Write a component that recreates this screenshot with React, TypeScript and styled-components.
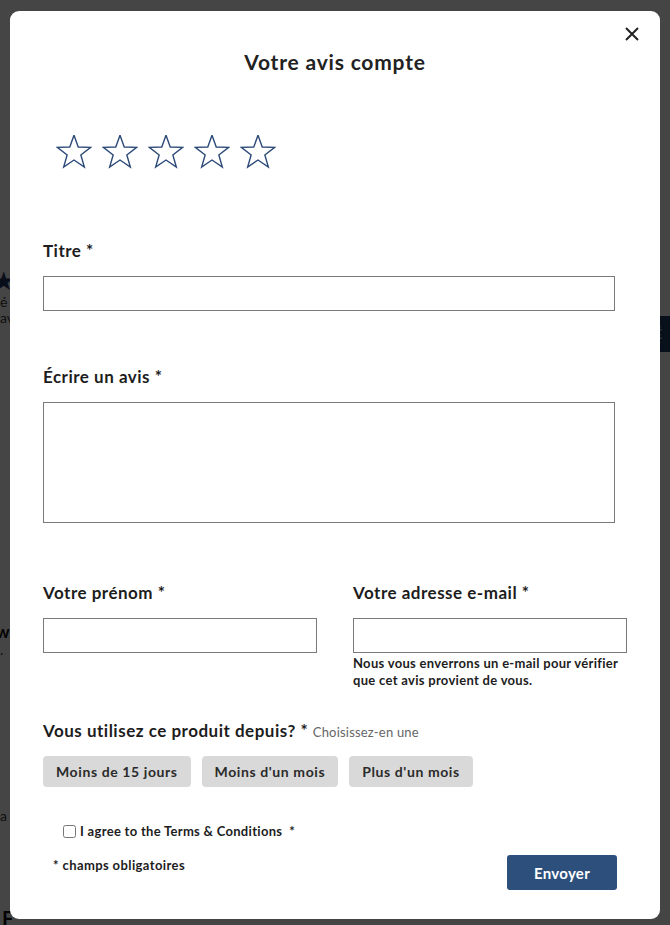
import React from "react";
import styled, { createGlobalStyle } from "styled-components";

const GlobalStyle = createGlobalStyle`
  html, body {
    margin: 0;
    padding: 0;
    height: 100%;
  }
  body {
    font-family: Lato, "Noto Sans", "Liberation Sans", sans-serif;
    color: #1d1d1d;
    background: #ffffff;
    overflow: hidden;
  }
`;

const starPoints = (cx: number, cy: number, outer: number, inner: number): string => {
  const pts: string[] = [];
  for (let i = 0; i < 10; i++) {
    const r = i % 2 === 0 ? outer : inner;
    const a = (Math.PI / 180) * (-90 + i * 36);
    pts.push(`${(cx + r * Math.cos(a)).toFixed(2)},${(cy + r * Math.sin(a)).toFixed(2)}`);
  }
  return pts.join(" ");
};

const Star = (): JSX.Element => (
  <StarSvg width="36" height="34" viewBox="0 0 36 34">
    <polygon
      points={starPoints(18, 17.8, 17.6, 7.2)}
      fill="none"
      stroke="#2c4a78"
      strokeWidth="1.4"
      strokeLinejoin="miter"
    />
  </StarSvg>
);

const durations = ["Moins de 15 jours", "Moins d'un mois", "Plus d'un mois"];

const App = (): JSX.Element => {
  return (
    <>
      <GlobalStyle />
      <Page>
        <TopBar />
        <PageBody>
          <LeftPeek>
            <PeekStar>★</PeekStar>
            <PeekText>é</PeekText>
            <PeekText>av</PeekText>
            <PeekBold>w</PeekBold>
            <PeekText>.</PeekText>
            <PeekText $top={150}>a</PeekText>
            <PeekHeading>F</PeekHeading>
          </LeftPeek>
          <RightPeek>
            <PeekButton>É</PeekButton>
          </RightPeek>
        </PageBody>
      </Page>
      <Overlay>
        <Modal>
          <CloseButton aria-label="Fermer">
            <svg width="14" height="14" viewBox="0 0 14 14">
              <path d="M1 1 L13 13 M13 1 L1 13" stroke="#222" strokeWidth="2" />
            </svg>
          </CloseButton>
          <Title>Votre avis compte</Title>
          <Stars>
            <Star />
            <Star />
            <Star />
            <Star />
            <Star />
          </Stars>

          <Field $top={72}>
            <Label>
              Titre <Req>*</Req>
            </Label>
            <TextInput $width={572} />
          </Field>

          <Field $top={56}>
            <Label>
              Écrire un avis <Req>*</Req>
            </Label>
            <TextArea />
          </Field>

          <TwoCols>
            <Field $top={0}>
              <Label>
                Votre prénom <Req>*</Req>
              </Label>
              <TextInput $width={274} />
            </Field>
            <Field $top={0}>
              <Label>
                Votre adresse e-mail <Req>*</Req>
              </Label>
              <TextInput $width={274} />
              <Note>
                Nous vous enverrons un e-mail pour vérifier
                <br />
                que cet avis provient de vous.
              </Note>
            </Field>
          </TwoCols>

          <Question>
            Vous utilisez ce produit depuis? <Req>*</Req> <Hint>Choisissez-en une</Hint>
          </Question>
          <Choices>
            {durations.map((d) => (
              <Choice key={d}>{d}</Choice>
            ))}
          </Choices>

          <AgreeRow>
            <CheckBox />
            <span>I agree to the Terms &amp; Conditions</span>
            <AgreeStar>*</AgreeStar>
          </AgreeRow>

          <Footer>
            <Required>* champs obligatoires</Required>
            <SubmitButton>Envoyer</SubmitButton>
          </Footer>
        </Modal>
      </Overlay>
    </>
  );
};

const Page = styled.div`
  height: 925px;
  display: flex;
  flex-direction: column;
  background: #ffffff;
`;

const TopBar = styled.div`
  height: 5px;
  background: #c6c6c6;
`;

const PageBody = styled.div`
  flex: 1;
  display: flex;
  justify-content: space-between;
`;

const LeftPeek = styled.div`
  width: 40px;
  display: flex;
  flex-direction: column;
  padding-top: 266px;
  margin-left: -8px;
  font-family: Lato, sans-serif;
  color: #3a3a3a;
`;

const PeekStar = styled.div`
  font-size: 26px;
  line-height: 28px;
  color: #1e3a66;
`;

const PeekText = styled.div<{ $top?: number }>`
  font-size: 14px;
  line-height: 16px;
  margin-left: 8px;
  margin-top: ${(p) => p.$top ?? 0}px;
`;

const PeekBold = styled.div`
  margin-top: 296px;
  font-size: 17px;
  font-weight: 700;
  line-height: 20px;
  margin-left: 4px;
  color: #111;
`;

const PeekHeading = styled.div`
  margin-top: 82px;
  font-size: 20px;
  font-weight: 700;
  margin-left: 10px;
  color: #111;
`;

const RightPeek = styled.div`
  width: 20px;
  padding-top: 316px;
`;

const PeekButton = styled.div`
  height: 36px;
  background: #1f3d66;
  color: #c8d2e4;
  font-size: 14px;
  font-weight: 700;
  line-height: 36px;
  padding-left: 4px;
`;

const Overlay = styled.div`
  position: fixed;
  inset: 0;
  background: rgba(0, 0, 0, 0.73);
  display: flex;
  justify-content: center;
  align-items: flex-start;
  padding-top: 11px;
`;

const Modal = styled.div`
  position: relative;
  width: 650px;
  height: 908px;
  box-sizing: border-box;
  background: #ffffff;
  border-radius: 9px;
  padding: 38px 33px 0;
  display: flex;
  flex-direction: column;
`;

const CloseButton = styled.button`
  position: absolute;
  top: 14px;
  right: 19px;
  width: 18px;
  height: 18px;
  padding: 0;
  border: none;
  background: none;
  display: flex;
  align-items: center;
  justify-content: center;
  cursor: pointer;
`;

const Title = styled.h2`
  margin: 0;
  font-size: 21px;
  line-height: 26px;
  letter-spacing: 0.8px;
  font-weight: 700;
  text-align: center;
  color: #222;
`;

const Stars = styled.div`
  display: flex;
  gap: 10px;
  margin-top: 60px;
  padding-left: 13px;
`;

const StarSvg = styled.svg`
  display: block;
`;

const Field = styled.div<{ $top: number }>`
  display: flex;
  flex-direction: column;
  margin-top: ${(p) => p.$top}px;
`;

const Label = styled.label`
  font-size: 17px;
  line-height: 20px;
  letter-spacing: 0.5px;
  font-weight: 700;
  color: #1d1d1d;
  margin-bottom: 15px;
`;

const Req = styled.span`
  font-weight: 700;
`;

const TextInput = styled.input<{ $width: number }>`
  width: ${(p) => p.$width}px;
  height: 35px;
  box-sizing: border-box;
  border: 1px solid #7a7a7a;
  border-radius: 0;
  padding: 4px 8px;
  font-size: 14px;
  outline: none;
`;

const TextArea = styled.textarea`
  width: 572px;
  height: 121px;
  box-sizing: border-box;
  border: 1px solid #7a7a7a;
  border-radius: 0;
  resize: none;
  display: block;
  outline: none;
`;

const TwoCols = styled.div`
  display: grid;
  grid-template-columns: 274px 274px;
  column-gap: 36px;
  margin-top: 60px;
`;

const Note = styled.div`
  margin-top: 2px;
  font-size: 13px;
  line-height: 17px;
  letter-spacing: 0.3px;
  font-weight: 700;
  color: #1d1d1d;
  white-space: nowrap;
`;

const Question = styled.div`
  margin-top: 32px;
  font-size: 17px;
  line-height: 20px;
  letter-spacing: 0.5px;
  font-weight: 700;
  color: #1d1d1d;
`;

const Hint = styled.span`
  font-size: 13px;
  font-weight: 400;
  letter-spacing: 0.2px;
  color: #666;
`;

const Choices = styled.div`
  display: flex;
  gap: 11px;
  margin-top: 14px;
`;

const Choice = styled.button`
  height: 31px;
  padding: 0 13px;
  border: none;
  border-radius: 4px;
  background: #d9d9d9;
  font-family: inherit;
  font-size: 14px;
  letter-spacing: 0.6px;
  font-weight: 700;
  color: #2b2b2b;
  cursor: pointer;
`;

const AgreeRow = styled.label`
  display: flex;
  align-items: center;
  gap: 4px;
  margin-top: 36px;
  padding-left: 20px;
  height: 16px;
  font-size: 13px;
  letter-spacing: 0.3px;
  font-weight: 700;
  color: #1d1d1d;
`;

const CheckBox = styled.input.attrs({ type: "checkbox" })`
  width: 13px;
  height: 13px;
  margin: 0;
`;

const AgreeStar = styled.span`
  margin-left: 3px;
`;

const Footer = styled.div`
  display: flex;
  justify-content: space-between;
  align-items: flex-start;
  margin-top: 16px;
  width: 564px;
  padding-left: 10px;
`;

const Required = styled.div`
  margin-top: 2px;
  font-size: 13px;
  line-height: 16px;
  letter-spacing: 0.4px;
  font-weight: 700;
  color: #1d1d1d;
`;

const SubmitButton = styled.button`
  width: 110px;
  height: 35px;
  border: none;
  border-radius: 3px;
  background: #2d4f7c;
  color: #ffffff;
  font-family: inherit;
  font-size: 15px;
  letter-spacing: 0.3px;
  font-weight: 700;
  cursor: pointer;
`;

export default App;
